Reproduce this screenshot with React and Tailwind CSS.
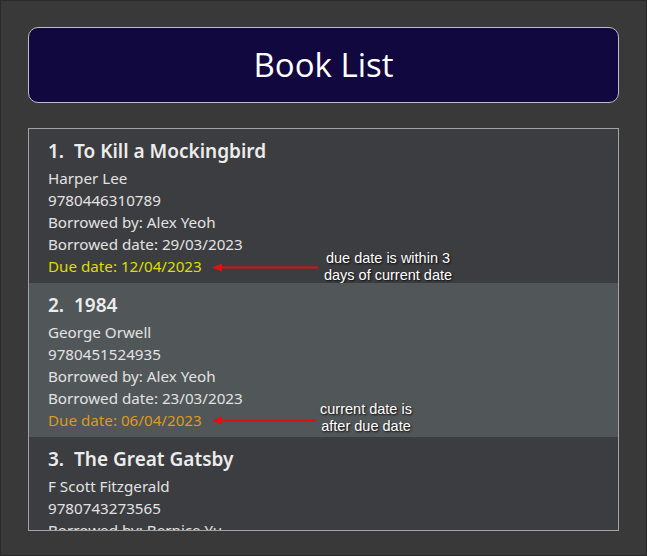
import React from 'react';

const books = [
  {
    title: 'To Kill a Mockingbird',
    author: 'Harper Lee',
    isbn: '9780446310789',
    borrower: 'Alex Yeoh',
    borrowed: '29/03/2023',
    due: '12/04/2023',
    status: 'soon',
    note: ['due date is within 3', 'days of current date'],
  },
  {
    title: '1984',
    author: 'George Orwell',
    isbn: '9780451524935',
    borrower: 'Alex Yeoh',
    borrowed: '23/03/2023',
    due: '06/04/2023',
    status: 'overdue',
    note: ['current date is', 'after due date'],
  },
  {
    title: 'The Great Gatsby',
    author: 'F Scott Fitzgerald',
    isbn: '9780743273565',
    borrower: 'Bernice Yu',
    borrowed: '20/03/2023',
    due: '03/04/2023',
    status: 'ok',
  },
];

function Arrow({ width }) {
  return (
    <svg width={width} height="10" viewBox={`0 0 ${width} 10`} className="block">
      <line x1="6" y1="5.5" x2={width} y2="5.5" stroke="#e01010" strokeWidth="2.2" />
      <polygon points="0,5.5 10,1.5 10,9.5" fill="#e01010" />
    </svg>
  );
}

function Note({ lines, className }) {
  return (
    <div
      className={`absolute text-center text-[14.5px] leading-[17px] text-white font-['Liberation_Sans',Arial,sans-serif] [text-shadow:1px_1px_2px_rgba(0,0,0,0.9)] ${className}`}
    >
      {lines.map((l) => (
        <div key={l}>{l}</div>
      ))}
    </div>
  );
}

export default function App() {
  return (
    <div className="w-[647px] h-[556px] bg-[#393939] border border-[#2a2a2a] px-[27px] pt-[26px] font-['Noto_Sans','Open_Sans',sans-serif] overflow-hidden">
      <div className="h-[76px] rounded-[10px] border border-[#bdbdcc] bg-[#10083f] flex items-center justify-center">
        <h1 className="text-[33px] leading-none text-white pb-[2px] font-medium font-['Open_Sans','Noto_Sans',sans-serif]">Book List</h1>
      </div>

      <div className="mt-[25px] h-[403px] border border-[#a3a3a3] bg-[#3c3d40] overflow-hidden">
        {books.map((b, i) => (
          <div
            key={b.isbn}
            className={`relative pl-[19px] pt-2 pb-1.5 ${i === 1 ? 'bg-[#515658]' : 'bg-[#3c3d40]'}`}
          >
            <div className="h-[28px] leading-[28px] text-[19px] font-semibold text-[#ececec] mb-[2px] whitespace-pre">
              {`${i + 1}.  ${b.title}`}
            </div>
            <div className="text-[15.2px] leading-[22px] text-[#e2e2e2]">
              <div>{b.author}</div>
              <div>{b.isbn}</div>
              <div>Borrowed by: {b.borrower}</div>
              <div>Borrowed date: {b.borrowed}</div>
              <div
                className={
                  b.status === 'soon'
                    ? 'text-[#dede00]'
                    : b.status === 'overdue'
                    ? 'text-[#de9a1c]'
                    : ''
                }
              >
                Due date: {b.due}
              </div>
            </div>
            {b.status === 'soon' && (
              <>
                <div className="absolute left-[183px] top-[133px]">
                  <Arrow width={106} />
                </div>
                <Note lines={b.note} className="left-[284px] top-[121px] w-[150px]" />
              </>
            )}
            {b.status === 'overdue' && (
              <>
                <div className="absolute left-[183px] top-[132px]">
                  <Arrow width={104} />
                </div>
                <Note lines={b.note} className="left-[262px] top-[118px] w-[150px]" />
              </>
            )}
          </div>
        ))}
      </div>
    </div>
  );
}
